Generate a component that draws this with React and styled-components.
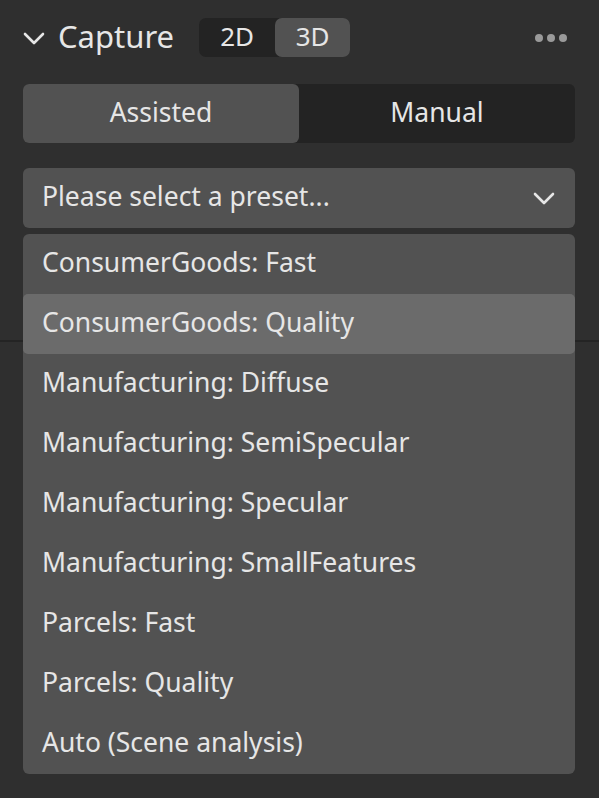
import React from "react";
import styled, { createGlobalStyle } from "styled-components";

const Global = createGlobalStyle`
  html, body { margin: 0; padding: 0; background: #2f2f2f; }
  body { font-family: "Noto Sans", "Open Sans", sans-serif; color: #e6e6e6; }
`;

const Page = styled.div`
  width: 599px;
  height: 798px;
  background: #2f2f2f;
  position: relative;
  overflow: hidden;
`;

const Section = styled.div`
  padding: 18px 24px 0 23px;
  height: 342px;
  box-sizing: border-box;
  border-bottom: 2px solid #242424;
  display: flex;
  flex-direction: column;
`;

const Header = styled.div`
  display: flex;
  align-items: center;
  height: 39px;
`;

const Title = styled.div`
  font-size: 31px;
  margin-left: 13px;
  margin-right: 25px;
  line-height: 1;
  padding-bottom: 3px;
`;

const Seg = styled.div`
  display: flex;
  background: #232323;
  border-radius: 7px;
  height: 39px;
`;

const SegBtn = styled.div`
  width: ${(p) => p.$w}px;
  display: flex;
  align-items: center;
  justify-content: center;
  font-size: 26px;
  padding-bottom: 3px;
  box-sizing: border-box;
  border-radius: 7px;
  background: ${(p) => (p.$active ? "#525252" : "transparent")};
`;

const Spacer = styled.div`
  flex: 1;
`;

const Dots = styled.div`
  display: flex;
  gap: 4px;
  margin-right: 8px;
`;

const Dot = styled.span`
  width: 8px;
  height: 8px;
  border-radius: 50%;
  background: #9a9a9a;
`;

const ModeToggle = styled.div`
  margin-top: 27px;
  display: flex;
  height: 59px;
  background: #232323;
  border-radius: 6px;
`;

const ModeBtn = styled.div`
  flex: 0 0 ${(p) => p.$w}px;
  display: flex;
  align-items: center;
  justify-content: center;
  font-size: 26.5px;
  padding-bottom: 4px;
  box-sizing: border-box;
  border-radius: 6px;
  background: ${(p) => (p.$active ? "#525252" : "transparent")};
`;

const SelectBox = styled.div`
  margin-top: 25px;
  height: 60px;
  background: #525252;
  border-radius: 6px;
  display: flex;
  align-items: center;
  padding: 0 20px 0 19px;
  font-size: 26.5px;
  box-sizing: border-box;
`;

const SelectText = styled.span`
  padding-bottom: 4px;
`;

const Menu = styled.div`
  position: absolute;
  left: 23px;
  top: 234px;
  width: 552px;
  background: #525252;
  border-radius: 6px;
  display: flex;
  flex-direction: column;
`;

const Item = styled.div`
  height: 60px;
  display: flex;
  align-items: center;
  padding-left: 19px;
  padding-bottom: 4px;
  box-sizing: border-box;
  font-size: 26.5px;
  border-radius: 5px;
  background: ${(p) => (p.$hl ? "#6b6b6b" : "transparent")};
`;

const items = [
  "ConsumerGoods: Fast",
  "ConsumerGoods: Quality",
  "Manufacturing: Diffuse",
  "Manufacturing: SemiSpecular",
  "Manufacturing: Specular",
  "Manufacturing: SmallFeatures",
  "Parcels: Fast",
  "Parcels: Quality",
  "Auto (Scene analysis)",
];

const Chevron = () => (
  <svg width="22" height="14" viewBox="0 0 22 14" fill="none">
    <path d="M2 3 L11 12 L20 3" stroke="#e6e6e6" strokeWidth="2.6" strokeLinecap="round" strokeLinejoin="round" />
  </svg>
);

export default function App() {
  return (
    <Page>
      <Global />
      <Section>
        <Header>
          <Chevron />
          <Title>Capture</Title>
          <Seg>
            <SegBtn $w={76}>2D</SegBtn>
            <SegBtn $w={75} $active>3D</SegBtn>
          </Seg>
          <Spacer />
          <Dots>
            <Dot />
            <Dot />
            <Dot />
          </Dots>
        </Header>
        <ModeToggle>
          <ModeBtn $w={276} $active>Assisted</ModeBtn>
          <ModeBtn $w={276}>Manual</ModeBtn>
        </ModeToggle>
        <SelectBox>
          <SelectText>Please select a preset...</SelectText>
          <Spacer />
          <Chevron />
        </SelectBox>
      </Section>
      <Menu>
        {items.map((t, i) => (
          <Item key={t} $hl={i === 1}>{t}</Item>
        ))}
      </Menu>
    </Page>
  );
}
